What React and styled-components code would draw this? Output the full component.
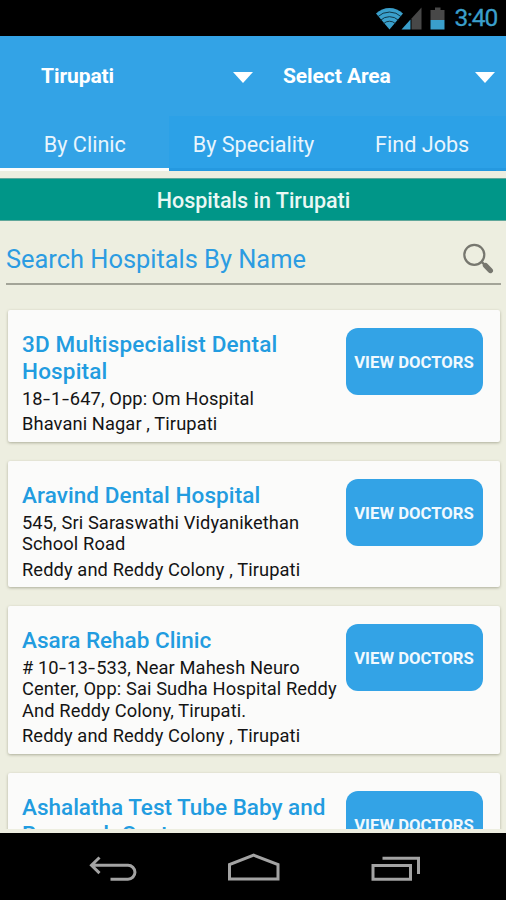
import styled, { createGlobalStyle } from 'styled-components';

const GlobalStyle = createGlobalStyle`
  * {
    box-sizing: border-box;
  }
  body {
    margin: 0;
    background: #000;
    font-family: Roboto, 'Liberation Sans', sans-serif;
  }
`;

const hospitals = [
  {
    name: ['3D Multispecialist Dental', 'Hospital'],
    address: ['18-1-647, Opp: Om Hospital'],
    area: 'Bhavani Nagar , Tirupati',
    height: 132,
    tracking: 0.18,
  },
  {
    name: ['Aravind Dental Hospital'],
    address: ['545, Sri Saraswathi Vidyanikethan', 'School Road'],
    area: 'Reddy and Reddy Colony , Tirupati',
    height: 126,
    tracking: 0.08,
  },
  {
    name: ['Asara Rehab Clinic'],
    address: [
      '# 10-13-533, Near Mahesh Neuro',
      'Center, Opp: Sai Sudha Hospital Reddy',
      'And Reddy Colony, Tirupati.',
    ],
    area: 'Reddy and Reddy Colony , Tirupati',
    height: 148,
    tracking: 0,
  },
  {
    name: ['Ashalatha Test Tube Baby and', 'Research Center'],
    address: [],
    area: '',
    height: 132,
    tracking: 0,
  },
];

function StatusBar() {
  return (
    <Status>
      <svg width="72" height="24" viewBox="0 0 72 24">
        <path d="M0 6.500a19.500 19.500 0 0 1 27 0l-13.500 16z" fill="#3a9fcb" />
        <g fill="none" stroke="#0c2a38" strokeWidth="0.900">
          <path d="M1.700 9.800a17 17 0 0 1 23.600 0" />
          <path d="M4.500 13.300a13 13 0 0 1 18 0" />
          <path d="M7.500 16.700a8.500 8.500 0 0 1 12 0" />
        </g>
        <path d="M45.500 0.500v22h-10v-11z" fill="#484848" />
        <path d="M34.500 12.500v10h-9z" fill="#3a9fcb" />
        <path d="M59 0.500h5.500v2.500h4v10h-14v-10h4.500z" fill="#484848" />
        <path d="M54.500 13h14v9.500h-14z" fill="#3a9fcb" />
      </svg>
      <Clock>3:40</Clock>
    </Status>
  );
}

// hyphens in street numbers are drawn wider than the font's own
function withDashes(text) {
  return text
    .split('-')
    .flatMap((part, i) => (i ? [<Dash key={i}>-</Dash>, part] : [part]));
}

function HospitalCard({ hospital }) {
  const { name, address, area, height, tracking } = hospital;

  return (
    <Card $height={height}>
      <Details>
        {name.map((line) => (
          <Name key={line} $tracking={tracking}>
            {line}
          </Name>
        ))}
        <Lines>
          {address.map((line) => (
            <Address key={line}>{withDashes(line)}</Address>
          ))}
        </Lines>
        <Area>{area}</Area>
      </Details>
      <ViewButton>VIEW DOCTORS</ViewButton>
    </Card>
  );
}

function App() {
  return (
    <Screen>
      <GlobalStyle />
      <StatusBar />
      <Header>
        <Spinners>
          <Spinner $width={253} $indent={41}>
            Tirupati
            <Caret />
          </Spinner>
          <Spinner $width={242} $indent={30}>
            Select Area
            <Caret />
          </Spinner>
        </Spinners>
        <Tabs>
          <Tab $active>By Clinic</Tab>
          <Tab>By Speciality</Tab>
          <Tab>Find Jobs</Tab>
        </Tabs>
      </Header>
      <Banner>Hospitals in Tirupati</Banner>
      <Search>
        <span>Search Hospitals By Name</span>
        <svg width="34" height="34" viewBox="0 0 34 34">
          <circle cx="13.300" cy="12.800" r="10" fill="none" stroke="#77776f" strokeWidth="2.200" />
          <path d="M20.300 19.700l3.500 3.200" stroke="#77776f" strokeWidth="2.500" />
          <path
            d="M24.500 23.500l4.800 5"
            stroke="#77776f"
            strokeWidth="5.400"
            strokeLinecap="round"
          />
        </svg>
      </Search>
      <List>
        {hospitals.map((hospital) => (
          <HospitalCard key={hospital.name[0]} hospital={hospital} />
        ))}
      </List>
      <NavBar>
        <svg width="506" height="67" viewBox="0 0 506 67" fill="none" stroke="#a3a3a3">
          <path
            d="M99.500 24.500l-8 7.800 8 7.800M91.500 32.300h36.500a6.900 6.900 0 0 1 0 13.900h-17.500"
            strokeWidth="3"
          />
          <path d="M229.500 46v-14.500l24.200-9.300 24.300 9.300v14.500z" strokeWidth="3" />
          <path
            d="M373 32.500h37.500v13.700h-37.500zM382.500 25.300h36v15.700"
            strokeWidth="3"
          />
        </svg>
      </NavBar>
    </Screen>
  );
}

const Screen = styled.main`
  width: 506px;
  height: 900px;
  display: flex;
  flex-direction: column;
  overflow: hidden;
  background: #edeee0;
`;

const Status = styled.div`
  height: 36px;
  flex: none;
  display: flex;
  align-items: center;
  justify-content: flex-end;
  gap: 7px;
  padding-right: 9px;
  background: #000;

  svg {
    margin-top: 1px;
  }
`;

const Clock = styled.span`
  font-size: 24.500px;
  line-height: 36px;
  letter-spacing: -1.200px;
  -webkit-text-stroke: 0.300px #3a9fcb;
  color: #3a9fcb;
`;

const Header = styled.header`
  height: 135px;
  flex: none;
  background: #33a3e6;
`;

const Spinners = styled.div`
  display: flex;
  height: 80px;
`;

const Spinner = styled.div`
  width: ${(props) => props.$width}px;
  display: flex;
  align-items: center;
  justify-content: space-between;
  padding-left: ${(props) => props.$indent}px;
  font-size: 21px;
  font-weight: 700;
  letter-spacing: -0.080px;
  color: #fff;
`;

const Caret = styled.span`
  border: 10.500px solid transparent;
  border-top: 11px solid #fff;
  border-bottom: 0;
  margin-top: 2px;
`;

const Tabs = styled.nav`
  display: flex;
  height: 55px;
`;

const Tab = styled.div`
  flex: 1;
  padding-left: 1px;
  text-align: center;
  font-size: 21.600px;
  line-height: 58px;
  color: #e8f5fd;
  background: ${(props) => (props.$active ? '#33a3e6' : '#2ca1e7')};
  border-bottom: 3px solid ${(props) => (props.$active ? '#fcfdfb' : '#2599e0')};
`;

const Banner = styled.h1`
  height: 43px;
  flex: none;
  margin: 7px 0 0;
  padding-left: 1px;
  background: #009688;
  border: solid #5fa79a;
  border-width: 1px 0;
  text-align: center;
  font-size: 21.500px;
  font-weight: 500;
  line-height: 43px;
  color: #e9f8f4;
`;

const Search = styled.div`
  height: 64px;
  flex: none;
  display: flex;
  align-items: center;
  justify-content: space-between;
  margin: 0 5px 0 6px;
  padding: 13px 6px 0 0;
  border-bottom: 2px solid #a3a498;
  font-size: 25.400px;
  color: #2c9ce2;
`;

const List = styled.section`
  height: 544px;
  flex: none;
  display: flex;
  flex-direction: column;
  gap: 19px;
  padding: 25px 6px 0 8px;
  overflow: hidden;
`;

const Card = styled.article`
  height: ${(props) => props.$height}px;
  flex: none;
  display: flex;
  justify-content: space-between;
  padding: 18px 17px 0 14px;
  background: #fbfbfa;
  border-radius: 2px;
  box-shadow: 0 1px 3px rgba(80, 80, 50, 0.4);
`;

const Details = styled.div`
  padding-top: 3px;
  white-space: nowrap;
`;

const Name = styled.div`
  font-size: 22.500px;
  font-weight: 500;
  line-height: 27px;
  letter-spacing: ${(props) => props.$tracking}px;
  color: #229ce0;
`;

const Lines = styled.div`
  padding-top: 3px;
`;

const Address = styled.div`
  font-size: 18.300px;
  line-height: 21.300px;
  letter-spacing: 0.100px;
  color: #141414;
`;

const Area = styled(Address)`
  margin-top: 4px;
`;

const Dash = styled.span`
  display: inline-block;
  margin: 0 1.600px;
  transform: scaleX(1.4);
`;

const ViewButton = styled.button`
  width: 137px;
  height: 67px;
  flex: none;
  padding: 2px 1px 0 0;
  border: 0;
  border-radius: 12px;
  background: #33a3e6;
  color: #f1f9fe;
  font: 700 16.700px Roboto, sans-serif;
  white-space: nowrap;
`;

const NavBar = styled.footer`
  height: 67px;
  flex: none;
  margin-top: 4px;
  background: #000;
`;

export default App;
